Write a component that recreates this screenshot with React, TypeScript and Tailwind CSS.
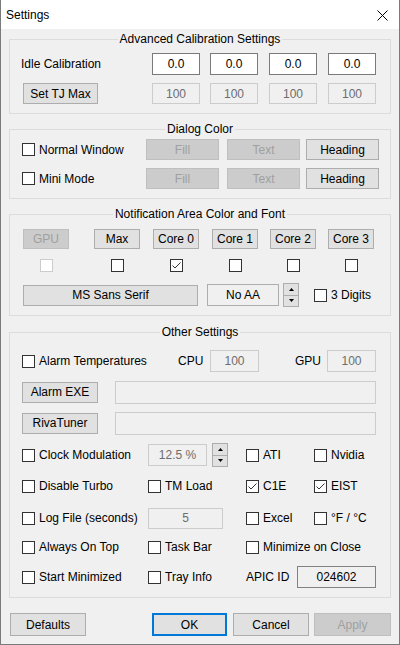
import type { ReactNode } from "react";

type BoxProps = { children?: ReactNode; className?: string };

function Btn({
  children,
  className = "",
  disabled = false,
  primary = false,
}: BoxProps & { disabled?: boolean; primary?: boolean }) {
  const tone = disabled
    ? "border bg-[#cccccc] border-[#bfbfbf] text-[#a0a0a0]"
    : primary
      ? "border-2 bg-[#e1e1e1] border-[#0078d7] text-black"
      : "border bg-[#e1e1e1] border-[#adadad] text-black";
  return (
    <button
      type="button"
      className={`flex items-center justify-center shrink-0 leading-none ${tone} ${className}`}
    >
      {children}
    </button>
  );
}

function Edit({
  children,
  className = "",
  variant = "disabled",
}: BoxProps & { variant?: "active" | "disabled" | "readonly" | "static" }) {
  const tone =
    variant === "active"
      ? "bg-white border-[#7a7a7a] text-black"
      : variant === "readonly"
        ? "bg-[#f0f0f0] border-[#828282] text-black"
        : variant === "static"
          ? "bg-[#f0f0f0] border-[#adadad] text-black"
          : "bg-[#f0f0f0] border-[#cccccc] text-[#6d6d6d]";
  return (
    <div
      className={`flex items-center justify-center shrink-0 border leading-none ${tone} ${className}`}
    >
      {children}
    </div>
  );
}

function Check({ checked = false, disabled = false }: { checked?: boolean; disabled?: boolean }) {
  return (
    <span
      className={`flex items-center justify-center w-[13px] h-[13px] shrink-0 border bg-white ${
        disabled ? "border-[#cccccc]" : "border-[#333333]"
      }`}
    >
      {checked && (
        <svg width="11" height="11" viewBox="0 0 11 11">
          <path d="M1.5 5.5 4 8l5.5-5.5" fill="none" stroke="#333333" strokeWidth="1" />
        </svg>
      )}
    </span>
  );
}

function CheckLabel({
  label,
  checked = false,
  className = "",
}: {
  label: string;
  checked?: boolean;
  className?: string;
}) {
  return (
    <label className={`flex items-center shrink-0 ${className}`}>
      <Check checked={checked} />
      <span className="ml-[4px] whitespace-nowrap">{label}</span>
    </label>
  );
}

function Spin({ className = "" }: { className?: string }) {
  return (
    <div className={`flex flex-col w-[16px] h-[24px] shrink-0 ${className}`}>
      <div className="flex-1 flex items-center justify-center bg-[#e1e1e1] border border-[#adadad]">
        <svg width="5" height="3" viewBox="0 0 5 3">
          <path d="M2.5 0 5 3H0z" fill="#000" />
        </svg>
      </div>
      <div className="flex-1 flex items-center justify-center bg-[#e1e1e1] border border-t-0 border-[#adadad]">
        <svg width="5" height="3" viewBox="0 0 5 3">
          <path d="M0 0h5L2.5 3z" fill="#000" />
        </svg>
      </div>
    </div>
  );
}

function Group({ title, children, className = "" }: BoxProps & { title: string }) {
  return (
    <fieldset className={`mx-[8px] border border-[#dcdcdc] ${className}`}>
      <legend className="mx-auto px-[2px] leading-[16px]">{title}</legend>
      {children}
    </fieldset>
  );
}

function NotifyColumn({
  label,
  checked = false,
  disabled = false,
  className = "",
}: {
  label: string;
  checked?: boolean;
  disabled?: boolean;
  className?: string;
}) {
  return (
    <div className={`flex flex-col items-center w-[46px] shrink-0 ${className}`}>
      <Btn disabled={disabled} className="w-[46px] h-[20px]">
        {label}
      </Btn>
      <div className="mt-[10px]">
        <Check checked={checked} disabled={disabled} />
      </div>
    </div>
  );
}

export default function App() {
  return (
    <div className="w-[400px] h-[645px] flex flex-col bg-[#f0f0f0] border-x border-b border-[#7a7a7a] text-[12px] text-black font-['Liberation_Sans',Arial,sans-serif]">
      {/* Title bar */}
      <div className="h-[29px] shrink-0 flex items-center justify-between bg-white pl-[5px] pr-[11px]">
        <span>Settings</span>
        <svg width="11" height="11" viewBox="0 0 11 11" className="mt-[2px]">
          <path d="M0.5 0.5l10 10M10.5 0.5l-10 10" stroke="#000" strokeWidth="1" />
        </svg>
      </div>

      {/* Advanced Calibration Settings */}
      <Group title="Advanced Calibration Settings" className="mt-[2px] pt-[6px] pb-[9px]">
        <div className="flex items-center h-[22px]">
          <span className="pl-[11px] w-[142px] shrink-0">Idle Calibration</span>
          <Edit variant="active" className="w-[48px] h-[22px]">0.0</Edit>
          <Edit variant="active" className="w-[48px] h-[22px] ml-[10px]">0.0</Edit>
          <Edit variant="active" className="w-[48px] h-[22px] ml-[11px]">0.0</Edit>
          <Edit variant="active" className="w-[48px] h-[22px] ml-[11px]">0.0</Edit>
        </div>
        <div className="flex items-center h-[21px] mt-[8px]">
          <Btn className="w-[75px] h-[21px] ml-[13px]">Set TJ Max</Btn>
          <Edit className="w-[48px] h-[21px] ml-[54px]">100</Edit>
          <Edit className="w-[48px] h-[21px] ml-[10px]">100</Edit>
          <Edit className="w-[48px] h-[21px] ml-[11px]">100</Edit>
          <Edit className="w-[48px] h-[21px] ml-[11px]">100</Edit>
        </div>
      </Group>

      {/* Dialog Color */}
      <Group title="Dialog Color" className="mt-[7px] pt-[2px] pb-[9px]">
        <div className="flex items-center h-[21px]">
          <div className="ml-[12px] w-[124px] shrink-0">
            <CheckLabel label="Normal Window" />
          </div>
          <Btn disabled className="w-[73px] h-[21px]">Fill</Btn>
          <Btn disabled className="w-[73px] h-[21px] ml-[8px]">Text</Btn>
          <Btn className="w-[73px] h-[21px] ml-[6px]">Heading</Btn>
        </div>
        <div className="flex items-center h-[21px] mt-[8px]">
          <div className="ml-[12px] w-[124px] shrink-0">
            <CheckLabel label="Mini Mode" />
          </div>
          <Btn disabled className="w-[73px] h-[21px]">Fill</Btn>
          <Btn disabled className="w-[73px] h-[21px] ml-[8px]">Text</Btn>
          <Btn className="w-[73px] h-[21px] ml-[6px]">Heading</Btn>
        </div>
      </Group>

      {/* Notification Area Color and Font */}
      <Group title="Notification Area Color and Font" className="mt-[7px] pt-[7px] pb-[9px]">
        <div className="flex">
          <NotifyColumn label="GPU" disabled className="ml-[13px]" />
          <NotifyColumn label="Max" className="ml-[25px]" />
          <NotifyColumn label="Core 0" checked className="ml-[13px]" />
          <NotifyColumn label="Core 1" className="ml-[13px]" />
          <NotifyColumn label="Core 2" className="ml-[12px]" />
          <NotifyColumn label="Core 3" className="ml-[12px]" />
        </div>
        <div className="flex items-center h-[22px] mt-[12px]">
          <Btn className="w-[175px] h-[21px] ml-[13px]">MS Sans Serif</Btn>
          <Edit variant="static" className="w-[72px] h-[22px] ml-[9px]">No AA</Edit>
          <Spin className="ml-[4px]" />
          <CheckLabel label="3 Digits" className="ml-[15px]" />
        </div>
      </Group>

      {/* Other Settings */}
      <Group title="Other Settings" className="mt-[8px] pt-[9px] pb-[8px]">
        <div className="flex items-center h-[24px]">
          <div className="ml-[12px] w-[156px] shrink-0">
            <CheckLabel label="Alarm Temperatures" />
          </div>
          <span className="w-[32px] shrink-0">CPU</span>
          <Edit className="w-[49px] h-[22px]">100</Edit>
          <span className="w-[32px] shrink-0 ml-[36px]">GPU</span>
          <Edit className="w-[49px] h-[22px]">100</Edit>
        </div>
        <div className="flex items-center h-[24px] mt-[7px]">
          <Btn className="w-[76px] h-[21px] ml-[12px]">Alarm EXE</Btn>
          <Edit className="w-[261px] h-[23px] ml-[17px]" />
        </div>
        <div className="flex items-center h-[24px] mt-[7px]">
          <Btn className="w-[76px] h-[21px] ml-[12px]">RivaTuner</Btn>
          <Edit className="w-[261px] h-[23px] ml-[17px]" />
        </div>
        <div className="flex items-center h-[24px] mt-[8px]">
          <div className="ml-[12px] w-[126px] shrink-0">
            <CheckLabel label="Clock Modulation" />
          </div>
          <Edit className="w-[59px] h-[22px]">12.5 %</Edit>
          <Spin className="ml-[5px]" />
          <div className="ml-[18px] w-[68px] shrink-0">
            <CheckLabel label="ATI" />
          </div>
          <CheckLabel label="Nvidia" />
        </div>
        <div className="flex items-center h-[24px] mt-[7px]">
          <div className="ml-[12px] w-[126px] shrink-0">
            <CheckLabel label="Disable Turbo" />
          </div>
          <div className="w-[98px] shrink-0">
            <CheckLabel label="TM Load" />
          </div>
          <div className="w-[68px] shrink-0">
            <CheckLabel label="C1E" checked />
          </div>
          <CheckLabel label="EIST" checked />
        </div>
        <div className="flex items-center h-[24px] mt-[8px]">
          <div className="ml-[12px] w-[126px] shrink-0">
            <CheckLabel label="Log File (seconds)" />
          </div>
          <Edit className="w-[75px] h-[21px]">5</Edit>
          <div className="ml-[23px] w-[68px] shrink-0">
            <CheckLabel label="Excel" />
          </div>
          <CheckLabel label="°F / °C" />
        </div>
        <div className="flex items-center h-[24px] mt-[5px]">
          <div className="ml-[12px] w-[126px] shrink-0">
            <CheckLabel label="Always On Top" />
          </div>
          <div className="w-[98px] shrink-0">
            <CheckLabel label="Task Bar" />
          </div>
          <CheckLabel label="Minimize on Close" />
        </div>
        <div className="flex items-center h-[24px] mt-[6px]">
          <div className="ml-[12px] w-[126px] shrink-0">
            <CheckLabel label="Start Minimized" />
          </div>
          <div className="w-[98px] shrink-0">
            <CheckLabel label="Tray Info" />
          </div>
          <span className="w-[51px] shrink-0">APIC ID</span>
          <Edit variant="readonly" className="w-[79px] h-[22px]">024602</Edit>
        </div>
      </Group>

      {/* Bottom buttons */}
      <div className="flex items-center mt-[15px]">
        <Btn className="w-[76px] h-[23px] ml-[9px]">Defaults</Btn>
        <Btn primary className="w-[75px] h-[23px] ml-[66px]">OK</Btn>
        <Btn className="w-[76px] h-[23px] ml-[6px]">Cancel</Btn>
        <Btn disabled className="w-[77px] h-[23px] ml-[5px]">Apply</Btn>
      </div>
    </div>
  );
}
